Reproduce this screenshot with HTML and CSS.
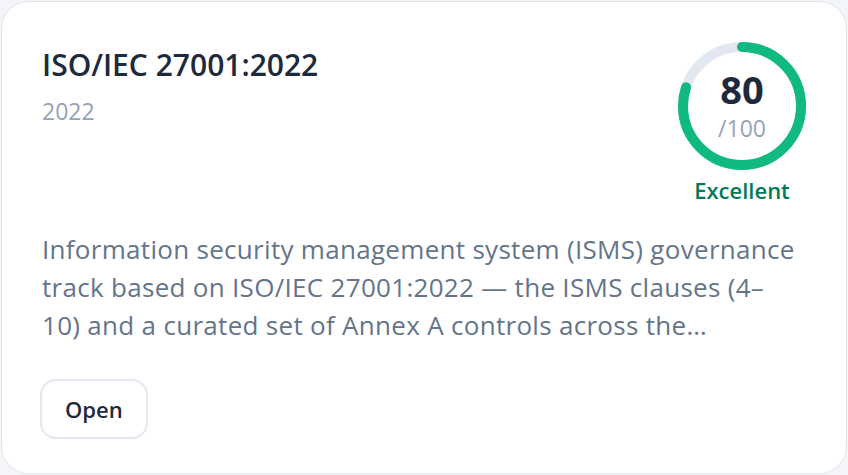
FILE: index.html
```html
<!DOCTYPE html>
<html lang="en">
<head>
<meta charset="utf-8">
<title>ISO/IEC 27001:2022</title>
<link rel="stylesheet" href="styles.css">
</head>
<body>
<div class="card">
  <div class="header">
    <div class="titles">
      <h2 class="title">ISO/IEC 27001:2022</h2>
      <div class="year">2022</div>
    </div>
    <div class="score">
      <div class="ring">
        <svg width="128" height="128" viewBox="0 0 128 128">
          <circle cx="64" cy="64" r="59" fill="none" stroke="#e2e8f0" stroke-width="10"/>
          <circle cx="64" cy="64" r="59" fill="none" stroke="#10b981" stroke-width="10" stroke-linecap="round" stroke-dasharray="296.6 370.7" transform="rotate(-90 64 64)"/>
        </svg>
        <div class="ring-text">
          <div class="num">80</div>
          <div class="den">/100</div>
        </div>
      </div>
      <div class="label">Excellent</div>
    </div>
  </div>
  <p class="desc">Information security management system (ISMS) governance track based on ISO/IEC 27001:2022 — the ISMS clauses (4–10) and a curated set of Annex A controls across the…</p>
  <button class="btn">Open</button>
</div>
</body>
</html>
```
FILE: styles.css
```css
html, body {
  margin: 0;
  padding: 0;
}
body {
  background: #f3f5f8;
  font-family: "Open Sans", "Noto Sans", sans-serif;
  width: 848px;
  height: 475px;
}
.card {
  box-sizing: border-box;
  width: 846px;
  height: 473px;
  margin: 1px;
  background: #ffffff;
  border: 1px solid #e2e8f0;
  border-radius: 28px;
  padding: 38px 40px 34px 40px;
  display: flex;
  flex-direction: column;
}
.header {
  display: flex;
  justify-content: space-between;
  align-items: flex-start;
}
.titles {
  padding-top: 5px;
}
.title {
  margin: 0;
  font-size: 30px;
  font-weight: 600;
  line-height: 40px;
  color: #1e293b;
}
.year {
  margin-top: 11px;
  font-size: 23px;
  line-height: 30px;
  color: #94a3b8;
}
.score {
  display: flex;
  flex-direction: column;
  align-items: center;
  padding-top: 2px;
}
.ring {
  position: relative;
  width: 128px;
  height: 128px;
}
.ring svg {
  display: block;
}
.ring-text {
  position: absolute;
  inset: 0;
  display: flex;
  flex-direction: column;
  align-items: center;
  padding-top: 25px;
}
.num {
  font-size: 38px;
  font-weight: 700;
  line-height: 44px;
  color: #1e293b;
}
.den {
  margin-top: 3px;
  font-size: 23px;
  line-height: 28px;
  color: #94a3b8;
}
.label {
  margin-top: 6px;
  font-size: 22px;
  font-weight: 600;
  line-height: 28px;
  color: #047857;
}
.desc {
  margin: 26px 0 0 0;
  max-width: 758px;
  font-size: 26px;
  letter-spacing: 0.3px;
  line-height: 38px;
  color: #64748b;
  display: -webkit-box;
  -webkit-line-clamp: 3;
  -webkit-box-orient: vertical;
  overflow: hidden;
}
.btn {
  align-self: flex-start;
  margin-top: auto;
  margin-left: -2px;
  font-family: inherit;
  font-size: 22px;
  font-weight: 600;
  line-height: 28px;
  color: #1e293b;
  background: #ffffff;
  border: 2px solid #e2e8f0;
  border-radius: 16px;
  padding: 14px 23px;
  cursor: pointer;
}
```
